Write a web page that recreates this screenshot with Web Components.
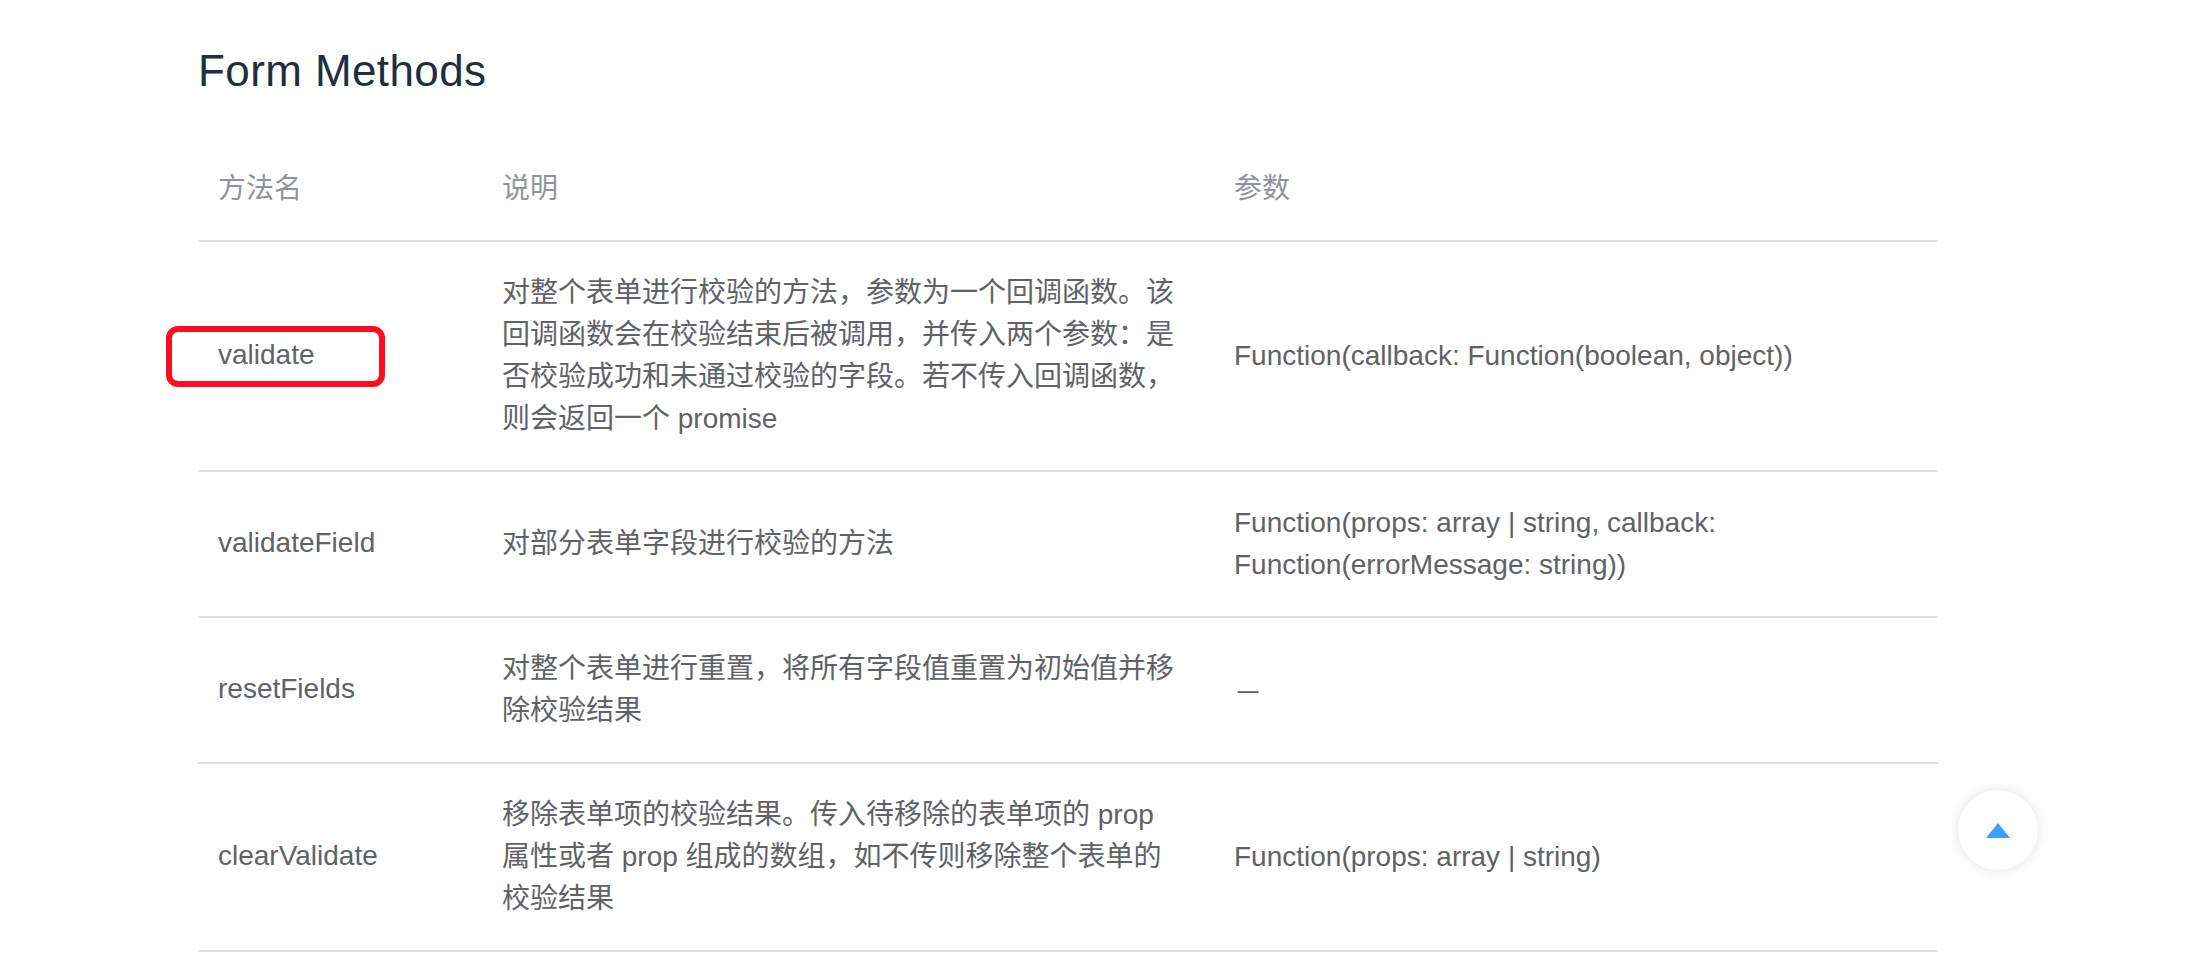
<!DOCTYPE html>
<html lang="zh">
<head>
<meta charset="utf-8">
<title>Form Methods</title>
<style>
  html, body { margin: 0; height: 100%; overflow: hidden; background: #fff; }
  body { font-family: "Liberation Sans", "Noto Sans CJK SC", sans-serif; }
</style>
</head>
<body>
<docs-section>
  <span slot="title">Form Methods</span>
  <method-row head>
    <span slot="name">方法名</span>
    <span slot="desc">说明</span>
    <span slot="params">参数</span>
  </method-row>
  <method-row>
    <red-mark slot="name">validate</red-mark>
    <span slot="desc">对整个表单进行校验的方法，参数为一个回调函数。该回调函数会在校验结束后被调用，并传入两个参数：是否校验成功和未通过校验的字段。若不传入回调函数，则会返回一个 promise</span>
    <span slot="params">Function(callback: Function(boolean, object))</span>
  </method-row>
  <method-row>
    <span slot="name">validateField</span>
    <span slot="desc">对部分表单字段进行校验的方法</span>
    <span slot="params">Function(props: array | string, callback: Function(errorMessage: string))</span>
  </method-row>
  <method-row>
    <span slot="name">resetFields</span>
    <span slot="desc">对整个表单进行重置，将所有字段值重置为初始值并移除校验结果</span>
    <span slot="params" style="display:inline-block;transform:scaleX(.75)">—</span>
  </method-row>
  <method-row>
    <span slot="name">clearValidate</span>
    <span slot="desc">移除表单项的校验结果。传入待移除的表单项的 prop 属性或者 prop 组成的数组，如不传则移除整个表单的校验结果</span>
    <span slot="params">Function(props: array | string)</span>
  </method-row>
</docs-section>
<back-top></back-top>

<script>
class DocsSection extends HTMLElement {
  connectedCallback() {
    this.attachShadow({ mode: 'open' });
    this.shadowRoot.innerHTML = `
      <style>
        :host { display: block; padding: 0 250px 0 198px; }
        h3 {
          margin: 0;
          padding: 41px 0 0;
          height: 138px;
          box-sizing: border-box;
          font-size: 44px;
          letter-spacing: .4px;
          line-height: 60px;
          font-weight: 400;
          color: #1f2f3d;
        }
      </style>
      <h3><slot name="title"></slot></h3>
      <slot></slot>
    `;
  }
}

class MethodRow extends HTMLElement {
  connectedCallback() {
    this.attachShadow({ mode: 'open' });
    this.shadowRoot.innerHTML = `
      <style>
        :host {
          display: grid;
          grid-template-columns: 284px 732px 1fr;
          align-items: center;
          border-bottom: 2px solid #dcdfe6;
          font-size: 28px;
          line-height: 42px;
          color: #606266;
        }
        :host([head]) { color: #909399; }
        .cell { padding: 30px 20px; }
        :host(:not([head])) .name { padding-top: 29px; padding-bottom: 31px; }
        .desc { padding-right: 36px; }
      </style>
      <div class="cell name"><slot name="name"></slot></div>
      <div class="cell desc"><slot name="desc"></slot></div>
      <div class="cell"><slot name="params"></slot></div>
    `;
  }
}

class RedMark extends HTMLElement {
  connectedCallback() {
    this.attachShadow({ mode: 'open' });
    this.shadowRoot.innerHTML = `
      <style>
        :host { display: inline-block; position: relative; }
        .box {
          position: absolute;
          left: -52px;
          top: -8px;
          width: 219px;
          height: 61px;
          box-sizing: border-box;
          border: 6px solid #ff0d1e;
          border-radius: 12px;
        }
      </style>
      <slot></slot><div class="box"></div>
    `;
  }
}

class BackTop extends HTMLElement {
  connectedCallback() {
    this.attachShadow({ mode: 'open' });
    this.shadowRoot.innerHTML = `
      <style>
        :host {
          position: fixed;
          left: 1958px;
          top: 790px;
          width: 80px;
          height: 80px;
          border-radius: 50%;
          background: #fff;
          box-shadow: 0 0 12px rgba(0, 0, 0, .12);
          display: flex;
          align-items: center;
          justify-content: center;
        }
        svg { display: block; }
      </style>
      <svg width="24" height="15" viewBox="0 0 24 15"><path d="M12 0 L24 15 L0 15 Z" fill="#409eff"/></svg>
    `;
  }
}

customElements.define('docs-section', DocsSection);
customElements.define('method-row', MethodRow);
customElements.define('red-mark', RedMark);
customElements.define('back-top', BackTop);
</script>
</body>
</html>
